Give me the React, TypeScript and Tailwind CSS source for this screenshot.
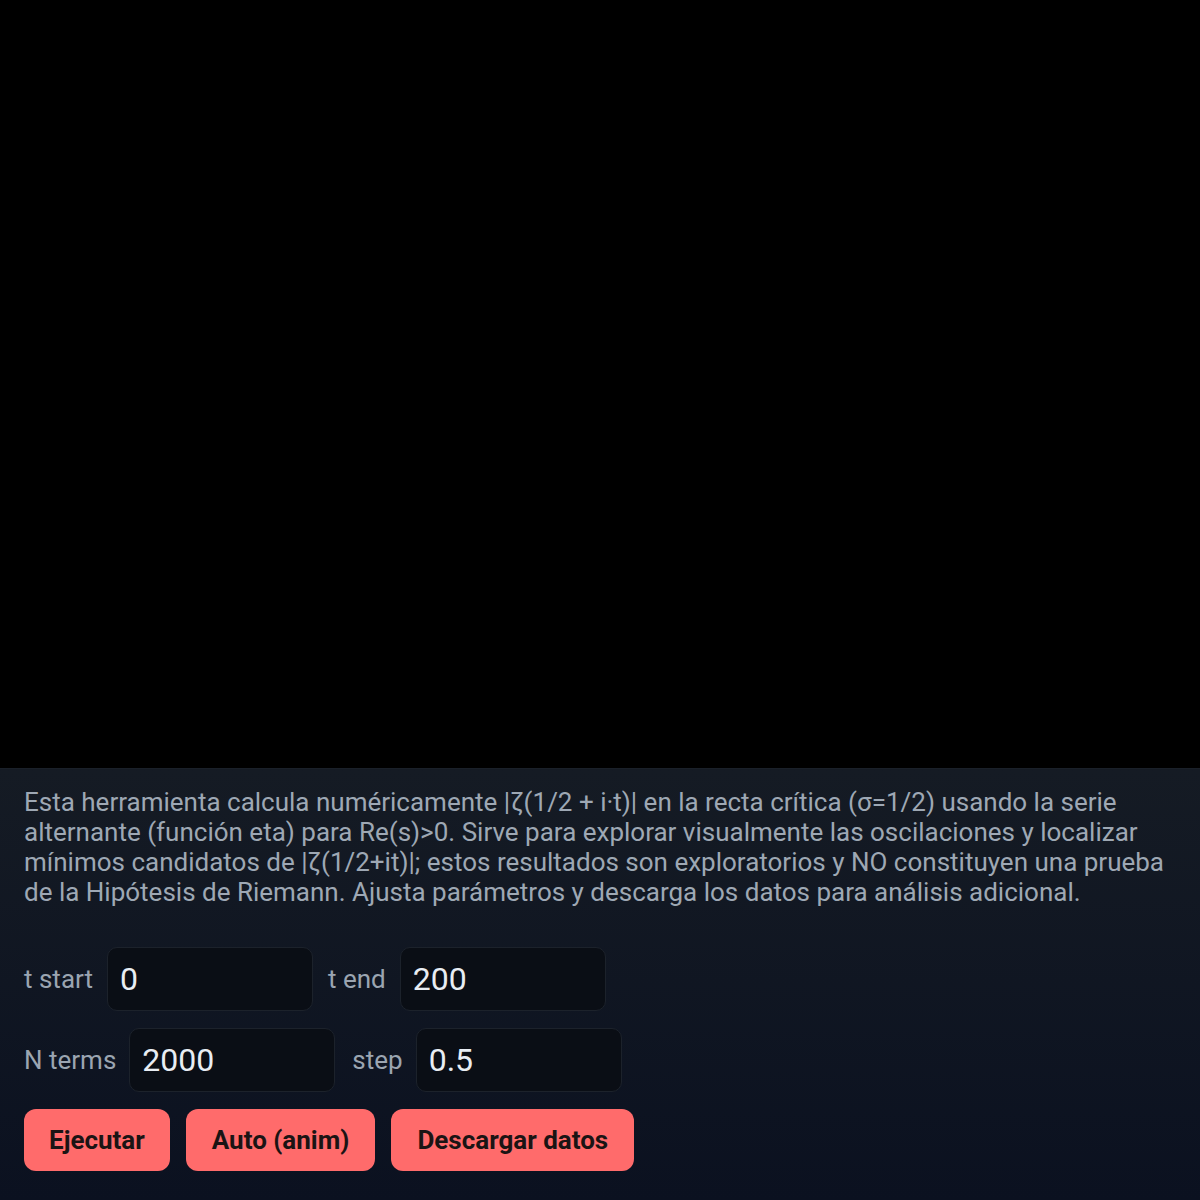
import React from "react";

export default function App() {
  const inputCls =
    "w-[206px] h-[64px] rounded-[10px] border border-[#1c222b] bg-[#0a0e15] pl-[12px] text-[32px] text-[#e8edf3] outline-none";
  const labelCls = "text-[26px] text-[#9ba5b1]";
  const btnCls = "h-[62px] rounded-[12px] bg-[#ff6b6b] text-[26px] font-bold text-[#1b1414]";
  return (
    <div className="w-[1200px] h-[1200px] flex flex-col bg-black" style={{ fontFamily: "Roboto, 'Noto Sans', sans-serif" }}>
      <div className="h-[768px] bg-black shrink-0" />
      <div className="flex-1 bg-gradient-to-b from-[#151b24] to-[#0b1120] border-t border-[#1a2029] px-6 pt-[18px]">
        <p className="text-[26px] leading-[30px] text-[#9ea8b4]">
          Esta herramienta calcula numéricamente |ζ(1/2 + i·t)| en la recta crítica (σ=1/2) usando la serie alternante (función eta) para Re(s)&gt;0. Sirve para explorar visualmente las oscilaciones y localizar mínimos candidatos de |ζ(1/2+it)|; estos resultados son exploratorios y NO constituyen una prueba de la Hipótesis de Riemann. Ajusta parámetros y descarga los datos para análisis adicional.
        </p>
        <div className="mt-[40px] flex flex-col gap-[17px]">
          <div className="flex items-center gap-[14px]">
            <span className={labelCls}>t start</span>
            <input className={inputCls} defaultValue="0" />
            <span className={labelCls + " ml-[1px]"}>t end</span>
            <input className={inputCls} defaultValue="200" />
          </div>
          <div className="flex items-center gap-[13px]">
            <span className={labelCls}>N terms</span>
            <input className={inputCls} defaultValue="2000" />
            <span className={labelCls + " ml-[4px]"}>step</span>
            <input className={inputCls} defaultValue="0.5" />
          </div>
          <div className="flex items-center gap-4">
            <button className={btnCls + " px-[25px]"}>Ejecutar</button>
            <button className={btnCls + " px-[26px]"}>Auto (anim)</button>
            <button className={btnCls + " px-[26px]"}>Descargar datos</button>
          </div>
        </div>
      </div>
    </div>
  );
}
